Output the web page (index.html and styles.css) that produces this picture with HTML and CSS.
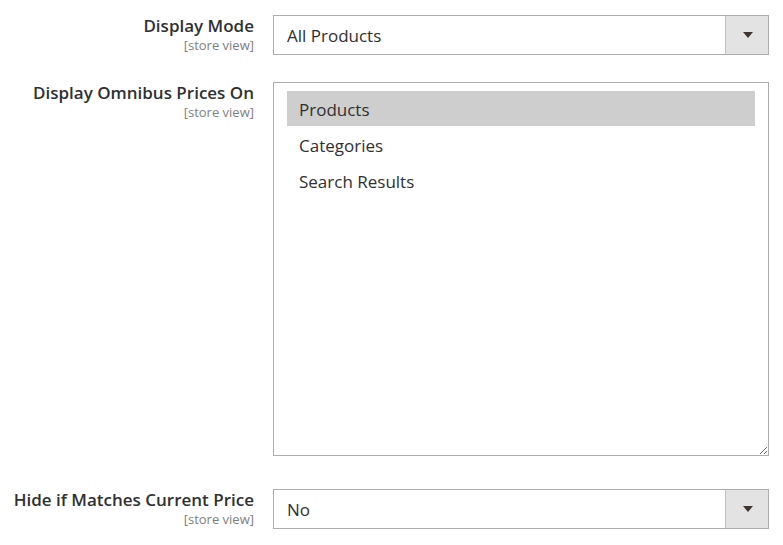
FILE: index.html
```html
<!DOCTYPE html>
<html lang="en">
<head>
    <meta charset="UTF-8">
    <meta name="viewport" content="width=device-width, initial-scale=1.0">
    <title>Omnibus Price Settings</title>
    <link rel="stylesheet" href="styles.css">
</head>
<body>

    <div class="config-form">
        <!-- Display Mode -->
        <div class="field-row">
            <div class="field-label">
                <span class="label-text">Display Mode</span>
                <span class="scope">[store view]</span>
            </div>
            <div class="field-control">
                <div class="select-box">
                    <span class="select-value">All Products</span>
                    <span class="select-arrow"></span>
                </div>
            </div>
        </div>

        <!-- Display Omnibus Prices On -->
        <div class="field-row field-row-multi">
            <div class="field-label">
                <span class="label-text">Display Omnibus Prices On</span>
                <span class="scope">[store view]</span>
            </div>
            <div class="field-control">
                <div class="multiselect">
                    <div class="option selected">Products</div>
                    <div class="option">Categories</div>
                    <div class="option">Search Results</div>
                </div>
            </div>
        </div>

        <!-- Hide if Matches Current Price -->
        <div class="field-row">
            <div class="field-label">
                <span class="label-text">Hide if Matches Current Price</span>
                <span class="scope">[store view]</span>
            </div>
            <div class="field-control">
                <div class="select-box">
                    <span class="select-value">No</span>
                    <span class="select-arrow"></span>
                </div>
            </div>
        </div>
    </div>

</body>
</html>
```

FILE: styles.css
```css
body {
    font-family: 'Open Sans', sans-serif;
    background-color: #fff;
    color: #303030;
    margin: 0;
}

.config-form {
    padding-top: 15px;
}

.field-row {
    display: grid;
    grid-template-columns: 254px 496px;
    column-gap: 19px;
    margin-bottom: 27px;
}

.field-row-multi {
    margin-bottom: 33px;
}

.field-label {
    display: flex;
    flex-direction: column;
    align-items: flex-end;
    text-align: right;
    padding-top: 1px;
}

.label-text {
    font-size: 17px;
    font-weight: 600;
    line-height: 20px;
    color: #303030;
    white-space: nowrap;
}

.scope {
    font-size: 13px;
    line-height: 14px;
    margin-top: 2px;
    color: #808080;
    white-space: nowrap;
}

.select-box {
    display: flex;
    height: 40px;
    border: 1px solid #adadad;
    box-sizing: border-box;
    background-color: #fff;
}

.select-value {
    flex: 1;
    padding-left: 13px;
    font-size: 17px;
    line-height: 40px;
}

.select-arrow {
    width: 42px;
    background-color: #e3e3e3;
    border-left: 1px solid #c2c2c2;
    position: relative;
}

.select-arrow::after {
    content: "";
    position: absolute;
    left: 17px;
    top: 16px;
    border-left: 5px solid transparent;
    border-right: 5px solid transparent;
    border-top: 6px solid #41362f;
}

.multiselect {
    height: 374px;
    border: 1px solid #adadad;
    box-sizing: border-box;
    padding: 8px 13px;
    overflow: auto;
    resize: vertical;
}

.option {
    font-size: 17px;
    line-height: 37px;
    height: 35px;
    padding-left: 12px;
    margin-bottom: 1px;
}

.option.selected {
    background-color: #cecece;
}
```
